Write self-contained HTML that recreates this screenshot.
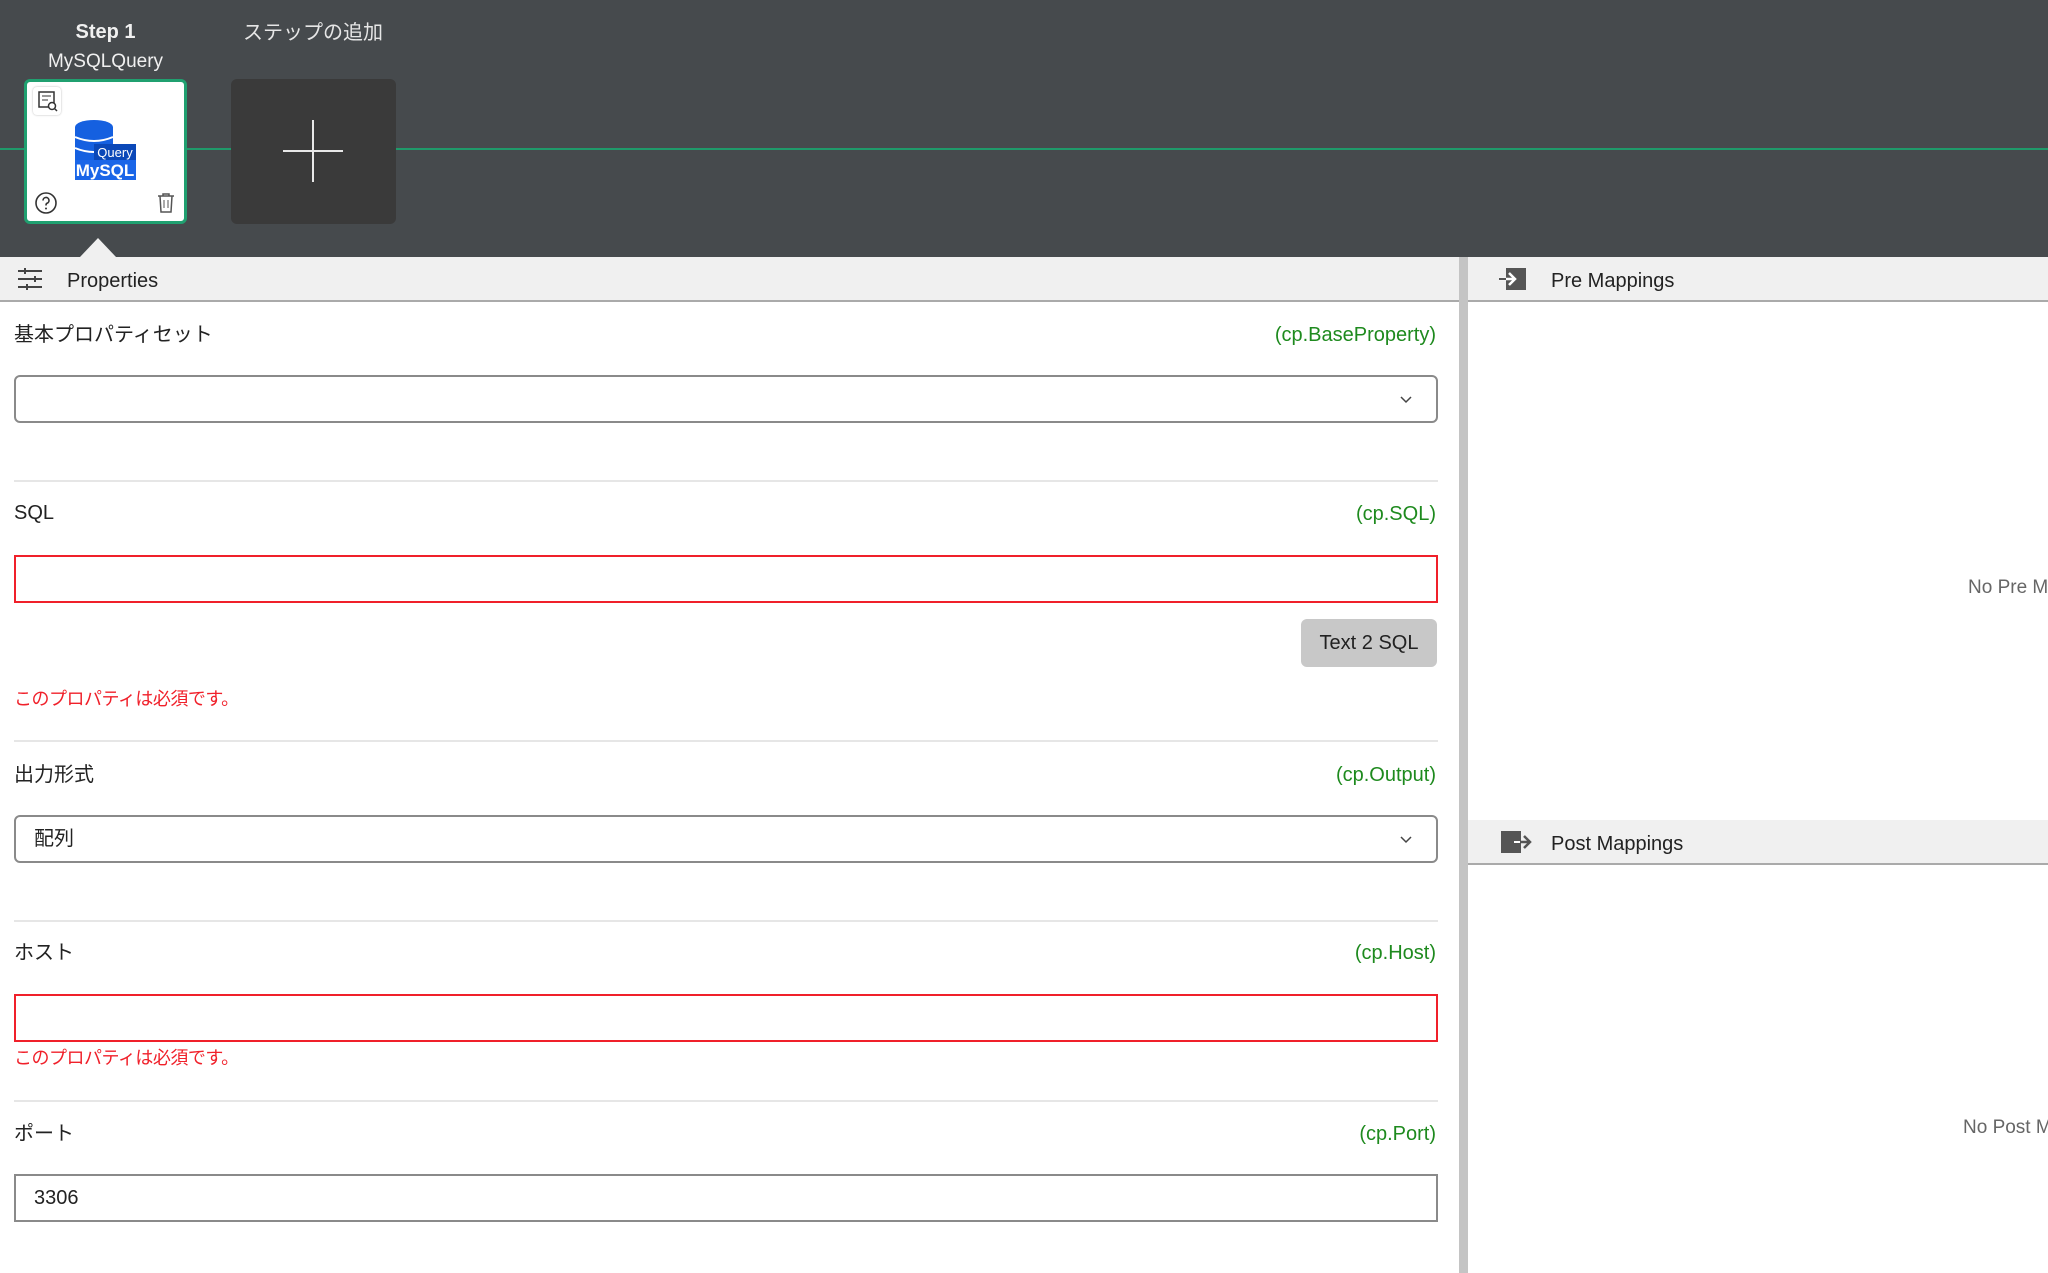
<!DOCTYPE html>
<html><head><meta charset="utf-8"><style>
*{box-sizing:border-box;margin:0;padding:0}
body{width:2048px;height:1273px;overflow:hidden;background:#fff;font-family:"Liberation Sans","Noto Sans CJK JP",sans-serif;color:#222;position:relative}
.a{position:absolute}
.top{left:0;top:0;width:2048px;height:257px;background:#464a4d}
.lbl{font-size:20px;color:#222}
.cp{font-size:20px;color:#1e8a1e;text-align:right;right:612px}
.inp{left:14px;width:1424px;height:48px;border:2px solid #8a8a8a;border-radius:6px;background:#fff}
.red{border:2px solid #f0202a;border-radius:0}
.div{left:14px;width:1424px;height:2px;background:#e6e6e6}
.err{font-size:18px;color:#f0202a;left:14px;letter-spacing:-0.5px}
.chev{right:22px;top:14px}
</style></head><body>
<div class="a top"></div>
<div class="a" style="left:0;top:148px;width:2048px;height:2px;background:#1f9a6a"></div>
<div class="a" style="left:24px;top:21px;width:163px;text-align:center;color:#f0f0f0;font-weight:bold;font-size:20px">Step 1</div>
<div class="a" style="left:14px;top:51px;width:183px;text-align:center;color:#f0f0f0;font-size:19px">MySQLQuery</div>
<div class="a" style="left:210px;top:16px;width:206px;text-align:center;color:#e6e6e6;font-size:20px">ステップの追加</div>
<div class="a" style="left:24px;top:79px;width:163px;height:145px;background:#fff;border:3px solid #20a070;border-radius:6px">
  <div class="a" style="left:6px;top:5px;width:28px;height:28px;border-radius:4px;box-shadow:0 0 2px #bbb">
    <svg width="28" height="28" viewBox="0 0 28 28"><rect x="6" y="5" width="15" height="15" fill="none" stroke="#333" stroke-width="1.5"/><line x1="9" y1="9" x2="18" y2="9" stroke="#333"/><line x1="9" y1="13" x2="15" y2="13" stroke="#333"/><circle cx="19" cy="19" r="3.5" fill="#fff" stroke="#333" stroke-width="1.5"/><line x1="21.5" y1="21.5" x2="24" y2="24" stroke="#333" stroke-width="1.5"/></svg>
  </div>
  <svg class="a" style="left:47px;top:38px" width="64" height="64" viewBox="0 0 64 64">
    <ellipse cx="20" cy="7" rx="19" ry="7" fill="#1560e0"/>
    <rect x="1" y="7" width="38" height="40" fill="#1560e0"/>
    <path d="M1 17 q19 8 38 0" stroke="#fff" stroke-width="2" fill="none"/>
    <path d="M1 28 q19 8 38 0" stroke="#fff" stroke-width="2" fill="none"/>
    <rect x="20" y="24" width="42" height="16" fill="#0b48b8"/>
    <text x="41" y="37" font-size="13" fill="#fff" text-anchor="middle" font-family="Liberation Sans">Query</text>
    <rect x="1" y="40" width="61" height="20" fill="#1a66e8"/>
    <text x="31" y="56" font-size="17" font-weight="bold" fill="#fff" text-anchor="middle" font-family="Liberation Sans">MySQL</text>
  </svg>
  <svg class="a" style="left:7px;top:109px" width="24" height="24" viewBox="0 0 24 24"><circle cx="12" cy="12" r="10" fill="none" stroke="#333" stroke-width="1.6"/><path d="M9 9.5a3 3 0 1 1 4 2.8c-1 .4-1 1-1 2.2" fill="none" stroke="#333" stroke-width="1.6"/><circle cx="12" cy="17.5" r="1" fill="#333"/></svg>
  <svg class="a" style="left:128px;top:109px" width="22" height="24" viewBox="0 0 22 24"><path d="M3 5h16M8 5V3h6v2M5 5l1 16h10l1-16" fill="none" stroke="#555" stroke-width="1.5"/><line x1="9" y1="9" x2="9" y2="17" stroke="#555"/><line x1="13" y1="9" x2="13" y2="17" stroke="#555"/></svg>
</div>
<div class="a" style="left:231px;top:79px;width:165px;height:145px;background:#3a3a3a;border-radius:6px">
  <div class="a" style="left:81px;top:41px;width:2px;height:62px;background:#e8e8e8"></div>
  <div class="a" style="left:52px;top:71px;width:60px;height:2px;background:#e8e8e8"></div>
</div>
<div class="a" style="left:80px;top:238px;width:0;height:0;border-left:18px solid transparent;border-right:18px solid transparent;border-bottom:19px solid #f0f0f0"></div>

<div class="a" style="left:0;top:257px;width:1459px;height:45px;background:#f0f0f0;border-bottom:2px solid #aaa"></div>
<svg class="a" style="left:17px;top:268px" width="26" height="22" viewBox="0 0 26 22"><g stroke="#444" stroke-width="2"><line x1="1" y1="3" x2="25" y2="3"/><line x1="1" y1="11" x2="25" y2="11"/><line x1="1" y1="19" x2="25" y2="19"/><line x1="8" y1="0" x2="8" y2="6"/><line x1="18" y1="8" x2="18" y2="14"/><line x1="10" y1="16" x2="10" y2="22"/></g></svg>
<div class="a" style="left:67px;top:270px;font-size:20px;color:#222">Properties</div>
<div class="a" style="left:1459px;top:257px;width:9px;height:1016px;background:#c4c4c4"></div>
<div class="a" style="left:1468px;top:257px;width:580px;height:45px;background:#f0f0f0;border-bottom:2px solid #aaa"></div>
<svg class="a" style="left:1498px;top:267px" width="30" height="24" viewBox="0 0 30 24"><rect x="8" y="1" width="20" height="22" fill="#555"/><path d="M1 12h15M11 6l6 6-6 6" stroke="#fff" stroke-width="2.5" fill="none"/><path d="M1 12h7" stroke="#555" stroke-width="2"/></svg>
<div class="a" style="left:1551px;top:270px;font-size:20px;color:#222">Pre Mappings</div>
<div class="a" style="left:1968px;top:577px;font-size:19px;color:#666;white-space:nowrap">No Pre Mappings</div>
<div class="a" style="left:1468px;top:820px;width:580px;height:45px;background:#f0f0f0;border-bottom:2px solid #aaa"></div>
<svg class="a" style="left:1500px;top:830px" width="36" height="24" viewBox="0 0 36 24"><rect x="1" y="1" width="20" height="22" fill="#555"/><path d="M12 12h18M24 6l6 6-6 6" stroke="#555" stroke-width="2.5" fill="none"/><path d="M14 12h6" stroke="#fff" stroke-width="2"/></svg>
<div class="a" style="left:1551px;top:833px;font-size:20px;color:#222">Post Mappings</div>
<div class="a" style="left:1963px;top:1117px;font-size:19px;color:#666;white-space:nowrap">No Post Mappings</div>

<div class="a lbl" style="left:14px;top:318px">基本プロパティセット</div>
<div class="a cp" style="top:324px">(cp.BaseProperty)</div>
<div class="a inp" style="top:375px"><svg class="a chev" width="16" height="16" viewBox="0 0 16 16"><path d="M3 6l5 5 5-5" stroke="#444" stroke-width="1.5" fill="none"/></svg></div>
<div class="a div" style="top:480px"></div>

<div class="a lbl" style="left:14px;top:502px">SQL</div>
<div class="a cp" style="top:503px">(cp.SQL)</div>
<div class="a inp red" style="top:555px"></div>
<div class="a" style="left:1301px;top:619px;width:136px;height:48px;background:#c8c8c8;border-radius:6px;font-size:20px;color:#222;text-align:center;line-height:48px">Text 2 SQL</div>
<div class="a err" style="top:685px">このプロパティは必須です。</div>
<div class="a div" style="top:740px"></div>

<div class="a lbl" style="left:14px;top:758px">出力形式</div>
<div class="a cp" style="top:764px">(cp.Output)</div>
<div class="a inp" style="top:815px"><div class="a" style="left:18px;top:5px;font-size:20px">配列</div><svg class="a chev" width="16" height="16" viewBox="0 0 16 16"><path d="M3 6l5 5 5-5" stroke="#444" stroke-width="1.5" fill="none"/></svg></div>
<div class="a div" style="top:920px"></div>

<div class="a lbl" style="left:14px;top:936px">ホスト</div>
<div class="a cp" style="top:942px">(cp.Host)</div>
<div class="a inp red" style="top:994px"></div>
<div class="a err" style="top:1044px">このプロパティは必須です。</div>
<div class="a div" style="top:1100px"></div>

<div class="a lbl" style="left:14px;top:1117px">ポート</div>
<div class="a cp" style="top:1123px">(cp.Port)</div>
<div class="a inp" style="top:1174px;border-radius:0"><div class="a" style="left:18px;top:11px;font-size:20px">3306</div></div>
</body></html>
